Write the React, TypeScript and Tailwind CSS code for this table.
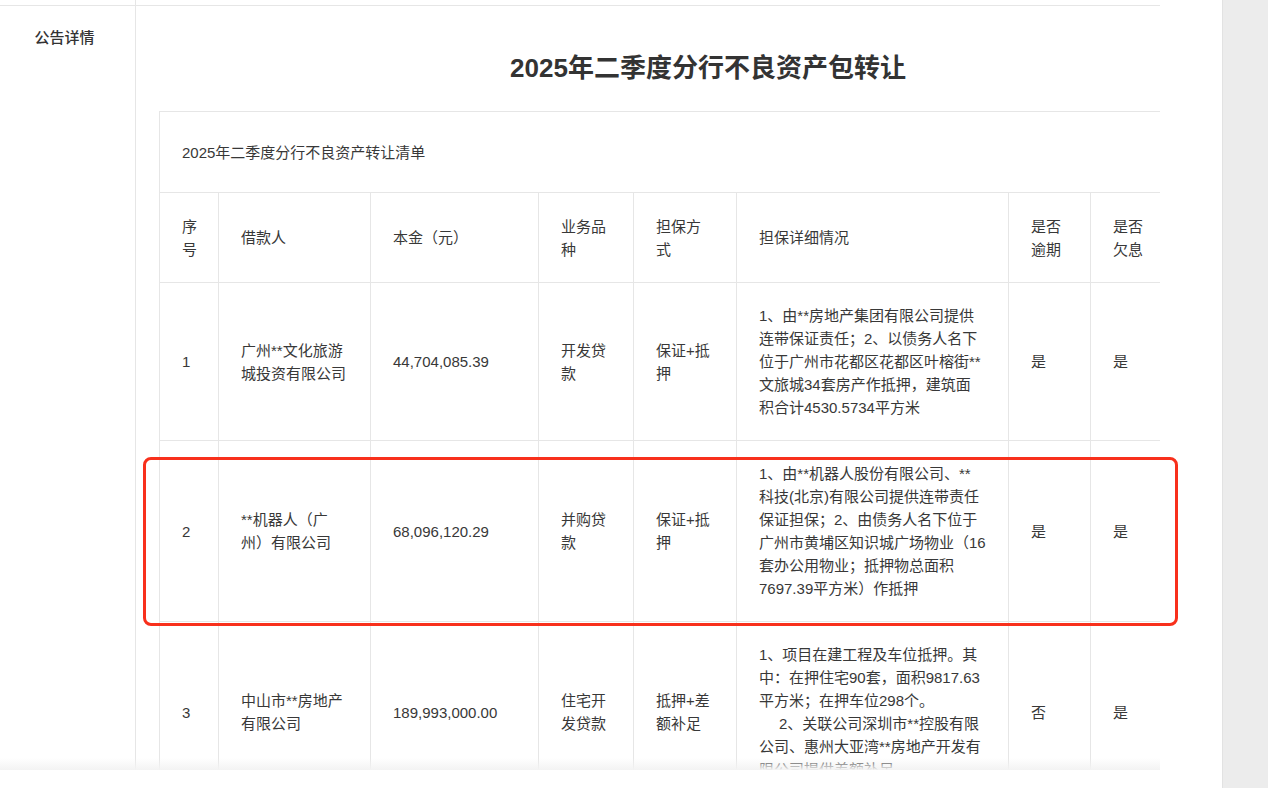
import React from "react"

const font = "font-['Liberation_Sans','Noto_Sans_CJK_SC',sans-serif]"

const colWidths = [59, 152, 168, 95, 103, 272, 82, 82]

const header: string[][] = [
    ['序', '号'],
    ['借款人'],
    ['本金（元）'],
    ['业务品', '种'],
    ['担保方', '式'],
    ['担保详细情况'],
    ['是否', '逾期'],
    ['是否', '欠息'],
]

// each cell is a list of lines, the detail cell may carry indented paragraphs
const rows: { cells: string[][]; indent?: number }[] = [
    {
        cells: [
            ['1'],
            ['广州**文化旅游', '城投资有限公司'],
            ['44,704,085.39'],
            ['开发贷', '款'],
            ['保证+抵', '押'],
            [
                '1、由**房地产集团有限公司提供',
                '连带保证责任；2、以债务人名下',
                '位于广州市花都区花都区叶榕街**',
                '文旅城34套房产作抵押，建筑面',
                '积合计4530.5734平方米',
            ],
            ['是'],
            ['是'],
        ],
    },
    {
        cells: [
            ['2'],
            ['**机器人（广', '州）有限公司'],
            ['68,096,120.29'],
            ['并购贷', '款'],
            ['保证+抵', '押'],
            [
                '1、由**机器人股份有限公司、**',
                '科技(北京)有限公司提供连带责任',
                '保证担保；2、由债务人名下位于',
                '广州市黄埔区知识城广场物业（16',
                '套办公用物业；抵押物总面积',
                '7697.39平方米）作抵押',
            ],
            ['是'],
            ['是'],
        ],
    },
    {
        indent: 3,
        cells: [
            ['3'],
            ['中山市**房地产', '有限公司'],
            ['189,993,000.00'],
            ['住宅开', '发贷款'],
            ['抵押+差', '额补足'],
            [
                '1、项目在建工程及车位抵押。其',
                '中：在押住宅90套，面积9817.63',
                '平方米；在押车位298个。',
                '2、关联公司深圳市**控股有限',
                '公司、惠州大亚湾**房地产开发有',
                '限公司提供差额补足。',
            ],
            ['否'],
            ['是'],
        ],
    },
]

const Lines = ({ lines, indent }: { lines: string[]; indent?: number }) => (
    <>
        {lines.map((l, i) => (
            <div key={i} className={`whitespace-nowrap ${indent === i ? 'pl-[20px]' : ''}`}>
                {l}
            </div>
        ))}
    </>
)

const ListTable = () => {
    return (
        <table className="ml-[23px] table-fixed border-collapse text-[15px] leading-[23px] text-[#383838]" style={{ width: 1013 }}>
            <colgroup>
                {colWidths.map((w, i) => (
                    <col key={i} style={{ width: w }} />
                ))}
            </colgroup>
            <tbody>
                <tr className="h-[81px]">
                    <td colSpan={8} className="border border-[#e6e6e6] px-[22px] align-middle">
                        2025年二季度分行不良资产转让清单
                    </td>
                </tr>
                <tr className="h-[90px]">
                    {header.map((h, i) => (
                        <td key={i} className="border border-[#e6e6e6] px-[22px] align-middle">
                            <Lines lines={h} />
                        </td>
                    ))}
                </tr>
                {rows.map((r, ri) => (
                    <tr key={ri}>
                        {r.cells.map((c, ci) => (
                            <td key={ci} className="border border-[#e6e6e6] px-[22px] py-[21px] align-middle">
                                <Lines lines={c} indent={ci === 5 ? r.indent : undefined} />
                            </td>
                        ))}
                    </tr>
                ))}
            </tbody>
        </table>
    )
}

export default function App() {
    return (
        <div className={`flex h-[788px] w-[1268px] overflow-hidden bg-white ${font}`}>
            <div className="flex w-[1222px] flex-col">
                <div className="relative h-[770px] w-[1160px] overflow-hidden">
                    <div className="flex h-[6px] border-b border-[#e6e6e6]">
                        <div className="w-[136px] border-r border-[#e6e6e6]" />
                    </div>
                    <div className="flex h-full">
                        <div className="w-[136px] shrink-0 border-r border-[#e6e6e6] pt-[21px] pr-[6px] text-center text-[15px] font-medium leading-[22px] text-[#333]">
                            公告详情
                        </div>
                        <div className="w-[1024px] shrink-0 overflow-hidden">
                            <div className="w-[1144px]">
                                <h1 className="pt-[45px] pb-[26px] text-center text-[26px] font-semibold leading-[34px] text-[#333]">
                                    2025年二季度分行不良资产包转让
                                </h1>
                                <ListTable />
                            </div>
                        </div>
                    </div>
                    <div className="pointer-events-none absolute bottom-0 left-0 h-[12px] w-full bg-gradient-to-b from-transparent to-[#f3f3f3]" />
                </div>
                <div className="h-[18px] bg-white" />
            </div>
            <div className="relative flex-1 border-l border-[#e2e2e2] bg-[#ececec]" />
            <div className="pointer-events-none absolute left-[143px] top-[457px] h-[169px] w-[1035px] rounded-[8px] border-[3px] border-[#f8301c]" />
        </div>
    )
}
